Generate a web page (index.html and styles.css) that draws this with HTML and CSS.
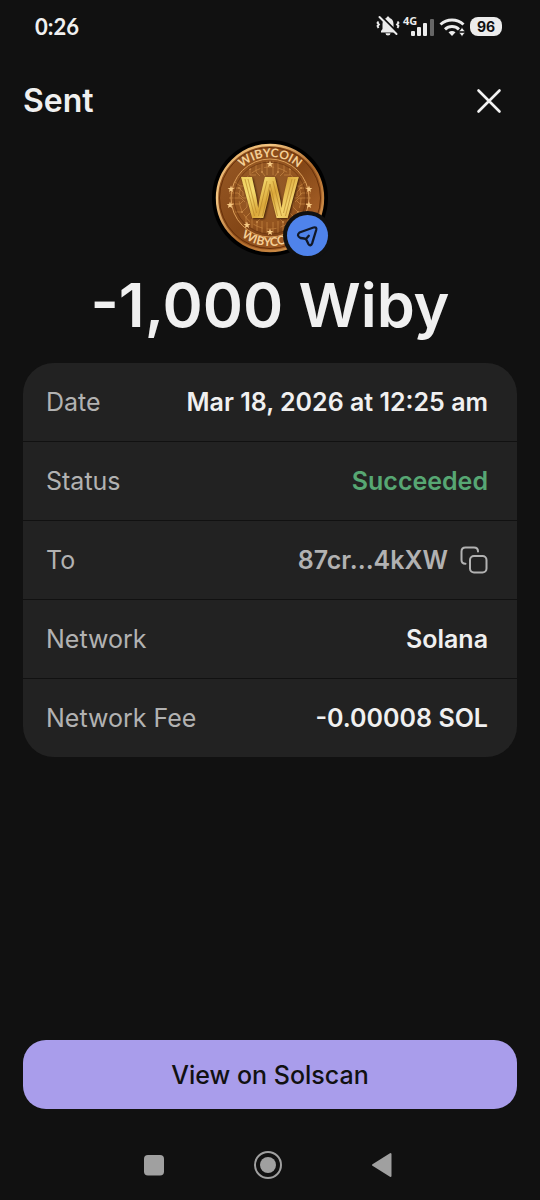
FILE: index.html
```html
<!DOCTYPE html>
<html lang="en">
<head>
<meta charset="utf-8">
<meta name="viewport" content="width=device-width, initial-scale=1">
<title>Sent</title>
<link rel="stylesheet" href="styles.css">
</head>
<body>
<div class="screen">
  <div class="status-bar">
    <span class="clock">0:26</span>
    <div class="status-icons">
      <svg class="status-svg" width="92" height="24" viewBox="0 0 92 24" aria-hidden="true">
        <path d="M5 18.500v-1.500l1.500-2v-5c0-3 1.500-5.200 4-5.900 0-2 3-2 3 0 2.500.7 4 2.900 4 5.900v5l1.500 2v1.500zM9.500 19.200h5a2.500 2.300 0 0 1-5 0z" fill="#ececec"/>
        <path d="M4.500 1.500l17 17" stroke="#111" stroke-width="2"/>
        <path d="M3.500 3l17 17" stroke="#ececec" stroke-width="2" stroke-linecap="round"/>
        <path d="M2.500 7.500l-1 1.500 1.500 1.500-1.500 1.500 1 2M21.500 7.500l1 1.500-1.500 1.500 1.500 1.500-1 2" fill="none" stroke="#ececec" stroke-width="1.800"/>
        <text x="27" y="11" class="net">4G</text>
        <g fill="#ececec">
          <rect x="35" y="17" width="4" height="5" rx="1"/>
          <rect x="41" y="13" width="4" height="9" rx="1"/>
          <rect x="47" y="9" width="4" height="13" rx="1"/>
        </g>
        <rect x="54" y="5" width="4" height="17" rx="1" fill="#666"/>
        <g fill="none" stroke="#ececec" stroke-width="3">
          <path d="M64.500 10.500c6.500-6 16.500-6 23 0"/>
          <path d="M69 15.300c4-3.700 10-3.700 14 0"/>
        </g>
        <path d="M72.500 18.300c2.300-1.700 4.700-1.700 7 0l-3.500 3.700z" fill="#ececec"/>
        <path d="M83 17.500l3-4 3 4zM83 18.500l3 4 3-4z" fill="#ececec" stroke="#111" stroke-width=".6"/>
      </svg>
      <span class="battery">96</span>
    </div>
  </div>

  <header class="header">
    <h1 class="title">Sent</h1>
    <button class="icon-button" type="button" aria-label="Close">
      <svg width="26" height="26" viewBox="0 0 26 26" aria-hidden="true"><path d="M2.500 2.500l21 21M23.500 2.500l-21 21" stroke="#f2f2f2" stroke-width="2.600" stroke-linecap="round"/></svg>
    </button>
  </header>

  <main class="main">
    <svg class="coin" width="120" height="120" viewBox="0 0 120 120" role="img" aria-label="Wibycoin, sent">
      <defs>
        <linearGradient id="rim" x1="0" y1="0" x2="1" y2="1">
          <stop offset="0" stop-color="#d99a50"/><stop offset=".25" stop-color="#f3c683"/><stop offset=".55" stop-color="#b06a2a"/><stop offset="1" stop-color="#e0a45c"/>
        </linearGradient>
        <radialGradient id="face" cx=".45" cy=".4" r=".65">
          <stop offset="0" stop-color="#935d2b"/><stop offset=".7" stop-color="#94541f"/><stop offset="1" stop-color="#743a12"/>
        </radialGradient>
        <linearGradient id="band" x1="0" y1="0" x2="1" y2="1">
          <stop offset="0" stop-color="#995a26"/><stop offset=".5" stop-color="#844717"/><stop offset="1" stop-color="#ba6e2f"/>
        </linearGradient>
        <linearGradient id="gold" x1="0" y1="0" x2="1" y2="1">
          <stop offset="0" stop-color="#e9c652"/><stop offset=".3" stop-color="#f5dc70"/><stop offset=".5" stop-color="#dba83a"/><stop offset=".7" stop-color="#f4d46c"/><stop offset="1" stop-color="#cb8f2f"/>
        </linearGradient>
        <path id="arcTop" d="M19 60a41 41 0 0 1 82 0"/>
        <path id="arcBottom" d="M12 60a48 48 0 0 0 96 0"/>
        <path id="star" d="M0-3.500l.9 2.400 2.500.1-2 1.600.7 2.500L0 1.700l-2.100 1.400.7-2.500-2-1.600 2.500-.1z"/>
        <g id="traces">
          <path d="M21 50h8l4 4v4M19 55h9l5 5h5M19 60h12l4 4M20 66h10l3-3M25 44l5 4h4M25 74h7l5-5v-5M31 38l5 4M36 85v-6l5-5v-7M42 90v-9l4-4v-6M47 93v-9l4-4M52 95V83M57 96V84M40 31v6h6M46 27v7l4 4M52 24v10l3 4M57 23v14"/>
          <g class="dots"><circle cx="29" cy="50" r="1"/><circle cx="23" cy="66" r="1"/><circle cx="32" cy="74" r="1"/><circle cx="36" cy="85" r="1"/><circle cx="47" cy="84" r="1"/><circle cx="40" cy="31" r="1"/><circle cx="52" cy="34" r="1"/></g>
        </g>
      </defs>
      <circle cx="60" cy="60" r="58" fill="#000"/>
      <circle cx="60" cy="60" r="53" fill="url(#band)" stroke="url(#rim)" stroke-width="2.400"/>
      <circle cx="60" cy="60" r="50.500" fill="none" stroke="#673009" stroke-width="1"/>
      <circle cx="60" cy="60" r="39" fill="url(#face)" stroke="#dda05a" stroke-width="1"/>
      <g fill="none" stroke="#d3924b" stroke-width=".7" class="circuit">
        <use href="#traces"/>
        <use href="#traces" transform="translate(120 0) scale(-1 1)"/>
        <circle cx="60" cy="60" r="36" stroke="#5e2c0c"/>
        <circle cx="60" cy="60" r="31" stroke-dasharray="10 4"/>
      </g>
      <g fill="#f8cb85">
        <use href="#star" x="60" y="26"/><use href="#star" x="21" y="51"/><use href="#star" x="20" y="67"/><use href="#star" x="99" y="51"/><use href="#star" x="99" y="67"/><use href="#star" x="37" y="87"/><use href="#star" x="60" y="94"/>
      </g>
      <text class="coin-name" text-anchor="middle"><textPath href="#arcTop" startOffset="50%">WIBYCOIN</textPath></text>
      <text class="coin-name" text-anchor="middle"><textPath href="#arcBottom" startOffset="50%">WIBYCOIN</textPath></text>
      <text class="coin-letter" x="60" y="80" text-anchor="middle">W</text>
      <g fill="none" stroke="#b8862b" stroke-width=".7">
        <path d="M35 41l9.500 37M38 41l8.500 34M57 43l-8.500 35M60 46l-7.500 32M60 46l7.500 32M63 43l8.500 35M82 41l-8.500 34M85 41l-9.500 37"/>
      </g>
      <circle cx="97.500" cy="97.500" r="24.500" fill="#111"/>
      <circle cx="97.500" cy="97.500" r="20.500" fill="#4f83eb"/>
      <path d="M89.500 94.500L103.500 89.500Q107 88.500 106.200 92L102.200 105.200Q100.500 109 98.300 105.800L96.500 102Q95.700 100.700 94.200 100.500L90.500 100Q86 97.500 89.500 94.500zM96 101L98.800 97.800" fill="none" stroke="#111827" stroke-width="2.300" stroke-linecap="round" stroke-linejoin="round"/>
    </svg>
    <p class="amount">-1,000 Wiby</p>

    <dl class="details">
      <div class="row"><dt>Date</dt><dd>Mar 18, 2026 at 12:25 am</dd></div>
      <div class="row"><dt>Status</dt><dd class="success">Succeeded</dd></div>
      <div class="row"><dt>To</dt><dd class="address">87cr...4kXW
        <button class="icon-button" type="button" aria-label="Copy address">
          <svg width="28" height="28" viewBox="0 0 28 28" fill="none" stroke="#b2b2b2" stroke-width="2" stroke-linecap="round" aria-hidden="true"><rect x="10" y="10" width="16.500" height="16.500" rx="4"/><path d="M5.500 17.800C3 17.800 1.500 16.300 1.500 14V5.500c0-2.500 1.500-4 4-4H14c2.500 0 4 1.500 4 4"/></svg>
        </button></dd></div>
      <div class="row"><dt>Network</dt><dd>Solana</dd></div>
      <div class="row"><dt>Network Fee</dt><dd>-0.00008 SOL</dd></div>
    </dl>
    <button class="primary" type="button">View on Solscan</button>
  </main>

  <nav class="system-nav" aria-label="System">
    <button class="icon-button" type="button" aria-label="Recent apps"><svg width="28" height="28" viewBox="0 0 28 28" aria-hidden="true"><rect x="4" y="4" width="20" height="20.500" rx="4" fill="#a0a0a0"/></svg></button>
    <button class="icon-button" type="button" aria-label="Home"><svg width="28" height="28" viewBox="0 0 28 28" aria-hidden="true"><circle cx="14" cy="14" r="13" fill="none" stroke="#a0a0a0" stroke-width="2"/><circle cx="14" cy="14" r="8" fill="#a0a0a0"/></svg></button>
    <button class="icon-button" type="button" aria-label="Back"><svg width="28" height="28" viewBox="0 0 28 28" aria-hidden="true"><path d="M5 14L22.500 3v22z" fill="#a0a0a0" stroke="#a0a0a0" stroke-width="2" stroke-linejoin="round"/></svg></button>
  </nav>
</div>
</body>
</html>
```
FILE: styles.css
```css
* {
  box-sizing: border-box;
}

body {
  margin: 0;
  background: #111;
  color: #f0f0f0;
  font-family: Inter, "Liberation Sans", sans-serif;
}

button {
  font: inherit;
  border: 0;
  cursor: pointer;
}

.screen {
  display: flex;
  flex-direction: column;
  min-height: 100vh;
}

.status-bar {
  display: flex;
  align-items: center;
  justify-content: space-between;
  height: 52px;
  padding: 0 38px 0 35px;
}

.clock {
  font-family: Lato, sans-serif;
  font-size: 22px;
  font-weight: 700;
}

.status-icons {
  display: flex;
  align-items: center;
  gap: 2px;
}

.status-svg {
  display: block;
}

.net {
  fill: #ececec;
  font-family: "Open Sans", sans-serif;
  font-size: 11px;
  font-weight: 700;
}

.battery {
  width: 32px;
  border-radius: 8px;
  background: #ececec;
  color: #111;
  font-size: 14px;
  font-weight: 700;
  line-height: 19px;
  text-align: center;
}

.header {
  display: flex;
  align-items: center;
  justify-content: space-between;
  height: 86px;
  padding: 12px 38px 0 23px;
}

.title {
  margin: 0;
  font-size: 32px;
  font-weight: 600;
  line-height: 40px;
}

.icon-button {
  display: flex;
  padding: 0;
  background: none;
}

.main {
  display: flex;
  flex: 1;
  flex-direction: column;
  align-items: center;
  padding: 0 23px 20px;
}

.coin {
  display: block;
}

.circuit {
  opacity: 0.8;
}

.dots {
  fill: #d99b56;
  stroke: none;
}

.coin-name {
  fill: #f5cf96;
  font-family: Lato, sans-serif;
  font-size: 12px;
  font-weight: 700;
}

.coin-letter {
  fill: url(#gold);
  filter: drop-shadow(1px 1px 1px #3f1d05);
  font-size: 57px;
  font-weight: 800;
}

.amount {
  margin: 10px 0 21px;
  font-size: 61px;
  font-weight: 600;
  line-height: 74px;
  white-space: nowrap;
}

.details {
  display: flex;
  flex-direction: column;
  gap: 1px;
  width: 100%;
  margin: 0;
  overflow: hidden;
  border-radius: 31px;
}

.row {
  display: flex;
  align-items: center;
  justify-content: space-between;
  gap: 16px;
  min-height: 78px;
  padding: 0 29px 0 23px;
  background: #222;
  font-size: 25px;
  line-height: 32px;
}

.row dt {
  color: #b2b2b2;
}

.row dd {
  margin: 0;
  font-weight: 600;
}

.row .success {
  color: #57a773;
}

.row .address {
  display: flex;
  align-items: center;
  gap: 12px;
  color: #b2b2b2;
}

.primary {
  width: 100%;
  min-height: 69px;
  margin-top: auto;
  border-radius: 23px;
  background: #a99deb;
  color: #111;
  font-size: 25px;
  font-weight: 500;
}

.system-nav {
  display: flex;
  align-items: center;
  justify-content: center;
  gap: 86px;
  height: 71px;
  padding-right: 4px;
}
```
